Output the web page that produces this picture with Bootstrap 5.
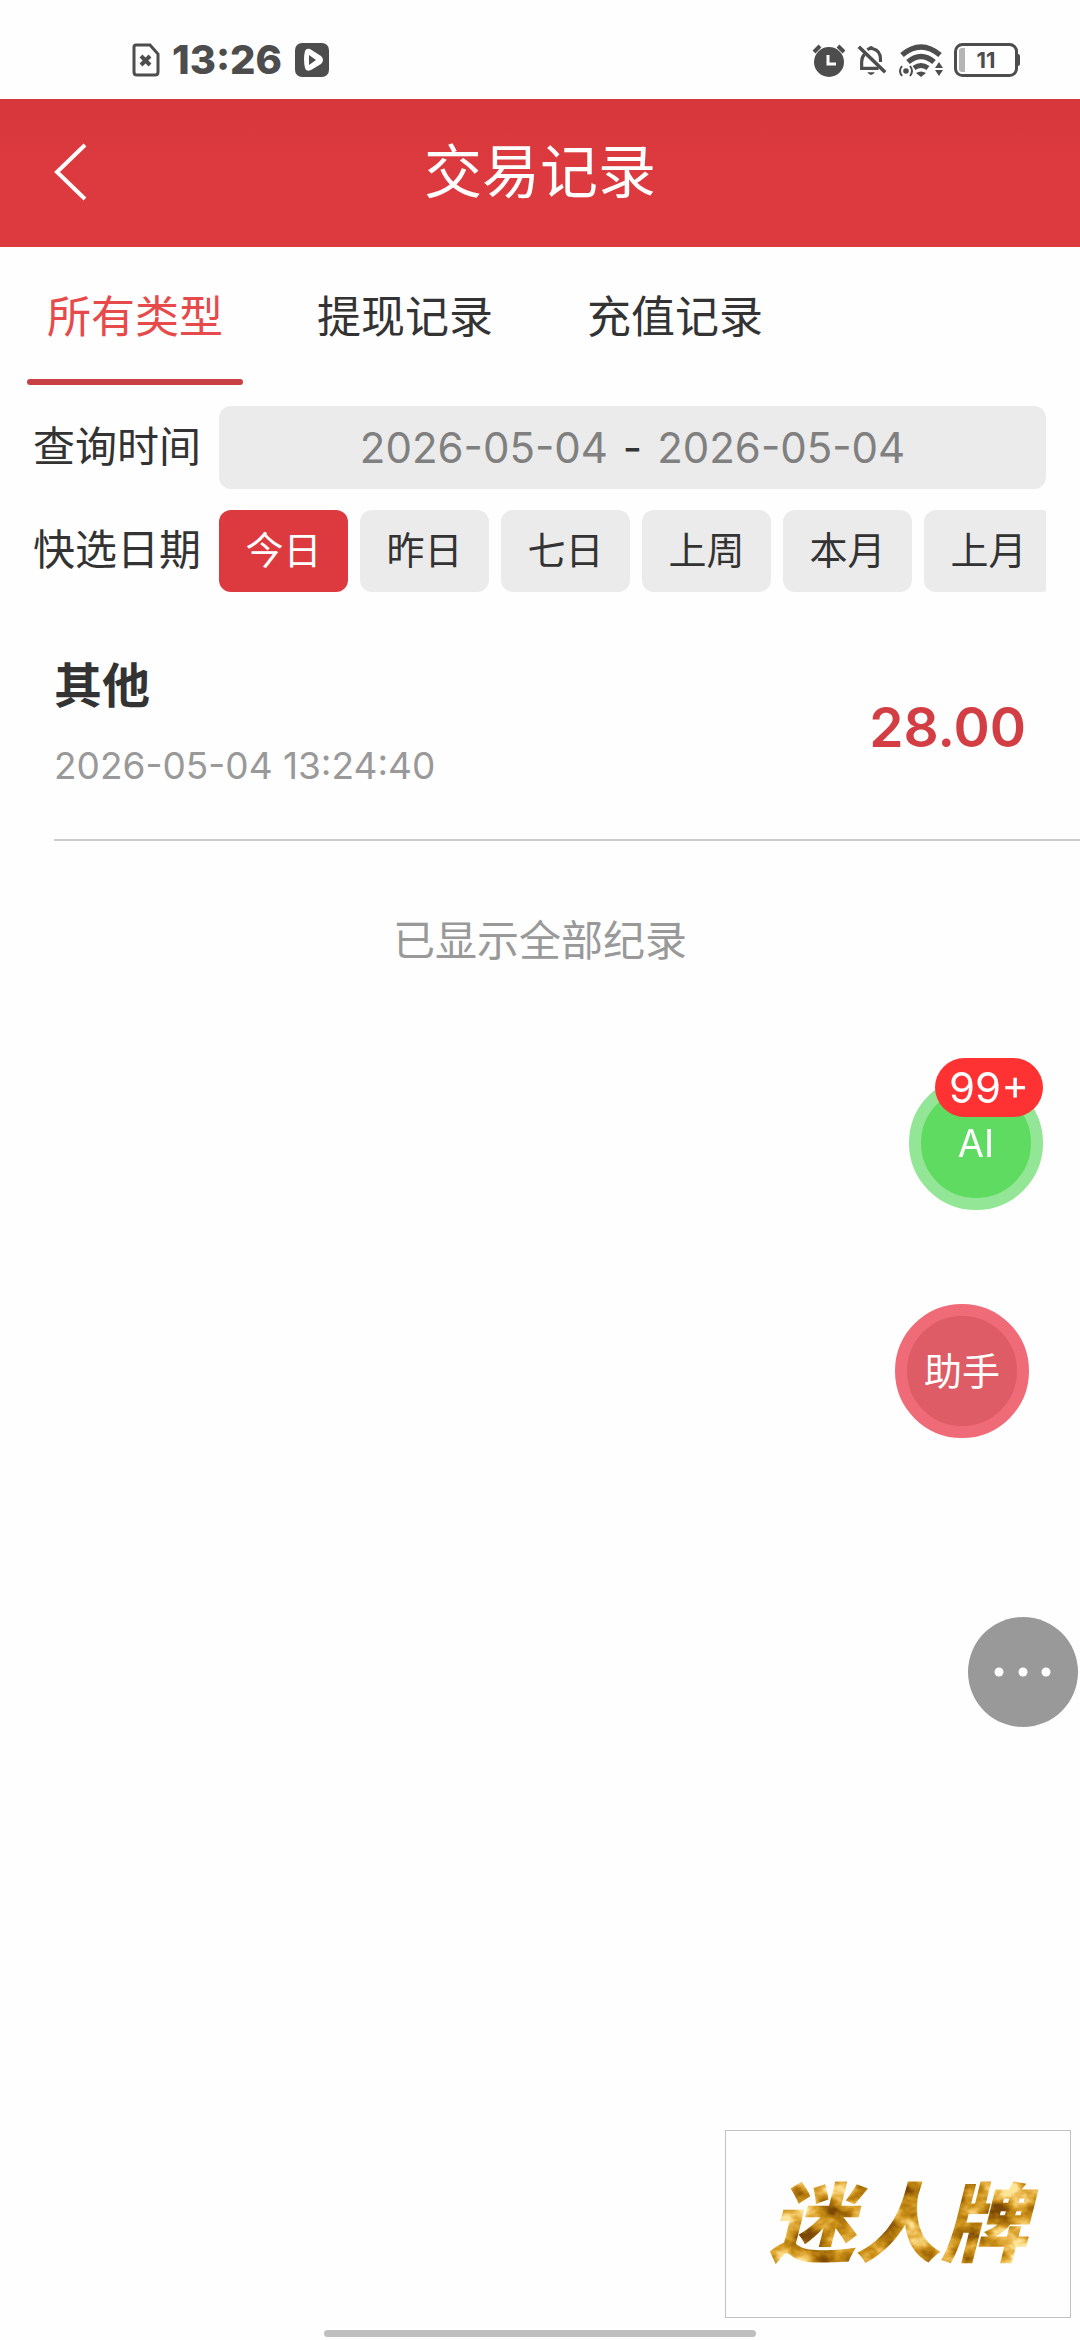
<!DOCTYPE html>
<html lang="zh-CN">
<head>
<meta charset="utf-8">
<meta name="viewport" content="width=device-width, initial-scale=1">
<title>交易记录</title>
<link href="https://cdn.jsdelivr.net/npm/bootstrap@5.3.0/dist/css/bootstrap.min.css" rel="stylesheet">
<style>
:root{--brand:#dc3a3f;--ink:#333;--chip:#ebebeb}
body{font-family:Inter,"Noto Sans CJK SC",sans-serif;color:var(--ink);background:#fefefe;min-height:100vh}
svg{display:block;flex:none}
.status-bar{height:99px;padding:20px 58px 0 132px;color:#4d4d4d}
.clock{font-size:40px;font-weight:800;line-height:40px;margin:0 13px 0 12px}
.signals{gap:10px}
.battery{width:68px;height:34px}
.battery-level{font-size:22px;line-height:34px;font-weight:700;padding-right:4px}
.title-bar{height:148px;padding-bottom:2px;background:linear-gradient(#d7373b,#dc3a3f 50%);color:#fff}
.title-bar h1{font-size:58px;line-height:84px;font-weight:400}
.back{left:53px}
.type-tabs{gap:54px;padding:0 27px}
.type-tabs a{width:216px;height:138px;padding-top:37px;font-size:44px;line-height:66px;color:var(--ink)}
.type-tabs a.active{color:#e64a4a}
.type-tabs a.active::after{content:"";position:absolute;left:0;right:0;bottom:0;height:6px;border-radius:3px;background:#c94044}
.filters{padding:21px 34px 0 33px;gap:21px}
.filter-label{width:186px;font-size:42px;line-height:60px;padding-bottom:2px}
.date-range{height:83px;border-radius:12px;background:var(--chip);gap:12px;font-size:42px}
.date-range input{width:254px;border:0;padding:0;background:none;color:#808080;text-align:center;font-size:42px;line-height:60px}
.quick{gap:12px}
.quick .btn{width:129px;height:82px;padding:0 0 2px;border:0;border-radius:12px;background:var(--chip);color:var(--ink);font-size:38px;line-height:80px}
.quick .btn.active{background:var(--brand);color:#fff}
.record{margin-left:54px;padding:58px 54px 49px 0;border-bottom:2px solid #ccc}
.record h2{font-size:48px;line-height:72px;font-weight:700}
.record time{font-size:37px;line-height:48px;color:#999;margin-top:20px}
.amount{font-size:55px;line-height:72px;font-weight:600;color:#d23e43;padding-top:14px}
.end-note{margin-top:70px;font-size:42px;line-height:60px;color:#999}
.bubble{width:134px;height:134px;border-radius:50%;color:#fff;font-size:38px;line-height:40px;padding:0}
.bubble-ai{right:37px;top:1076px;background:#60db61;border:12px solid #93e695}
.bubble-help{right:51px;top:1304px;background:#de5c66;border:12px solid #ef6b77}
.unread{right:-12px;top:-30px;height:59px;width:108px;border-radius:30px;background:#ff3233;font-size:42px;line-height:59px}
.bubble-more{right:2px;top:1617px;width:110px;height:110px;border:0;background:#999}
.promo{right:9px;bottom:22px;width:346px;height:188px;background:#fefefe;border:1px solid #bfc3c3}
.promo-name{font-size:86px;line-height:96px;font-weight:900;font-style:italic;color:#c98a1c;filter:url(#goldLeaf)}
.home-bar{left:30%;right:30%;bottom:3px;height:7px;border-radius:4px;background:#bfbfbf}
</style>
<script src="https://cdn.jsdelivr.net/npm/bootstrap@5.3.0/dist/js/bootstrap.bundle.min.js"></script>
</head>
<body>
<header>
<div class="status-bar d-flex align-items-center justify-content-between">
  <div class="d-flex align-items-center">
    <svg width="28" height="34" viewBox="0 0 28 34" fill="none" stroke="currentColor"><path d="M4 2h14l8 9v18q0 3-3 3H5q-3 0-3-3V4q0-2 2-2z" stroke-width="3"/><path d="M9 13l9 9M18 13l-9 9" stroke-width="4"/></svg>
    <span class="clock">13:26</span>
    <svg width="34" height="34" viewBox="0 0 34 34"><rect width="34" height="34" rx="7" fill="currentColor"/><path d="M10 8q1-3 5-2l11 7q4 4 0 8l-10 6q-5 2-6-2-2-9 0-17z" fill="#fff"/><path d="M14 12l7 5-7 5z" fill="currentColor"/></svg>
  </div>
  <div class="signals d-flex align-items-center">
    <svg width="34" height="34" viewBox="0 0 34 34" fill="none" stroke="currentColor"><circle cx="17" cy="19" r="15" fill="currentColor" stroke="none"/><path d="M2 9l6-6M32 9l-6-6" stroke-width="4"/><path d="M16 12v9h8" stroke="#fff" stroke-width="3"/></svg>
    <svg width="32" height="34" viewBox="0 0 34 34" fill="none" stroke="currentColor" stroke-width="3.400"><path d="M9 11q-3 3-3 8v7h18M12 6q3-2 6-1 8 2 8 11v3"/><path d="M3 3l28 27" stroke-width="3.800"/><path d="M12 30h8q-4 6-8 0z" fill="currentColor" stroke="none"/><path d="M13 4q3-4 6 0z" fill="currentColor" stroke="none"/></svg>
    <svg width="46" height="34" viewBox="0 0 46 34" fill="none" stroke="currentColor"><path d="M4 12Q23-4 42 12M10 19q13-11 26 0" stroke-width="5.500"/><path d="M16 25q7-5 14 0" stroke-width="5"/><path d="M18 30q5-3 10 0l-5 4z" fill="currentColor" stroke="none"/><circle cx="8" cy="28" r="2.800" fill="currentColor" stroke="none"/><path d="M4 23q-4 5 0 10M12 23q4 5 0 10" stroke-width="2"/><path d="M37 25l4-6 4 6zM37 27h8l-4 6z" fill="currentColor" stroke="none"/></svg>
    <div class="battery position-relative text-center">
      <svg class="position-absolute top-0 start-0" width="68" height="34" viewBox="0 0 68 34"><rect x="1.500" y="1.500" width="61" height="31" rx="7" fill="none" stroke="currentColor" stroke-width="3"/><path d="M5 8q0-3 3-3h3v24H8q-3 0-3-3z" fill="#b5b5b5"/><path d="M64 11q2 0 2 2v8q0 2-2 2z" fill="currentColor"/></svg>
      <span class="battery-level position-relative d-block">11</span>
    </div>
  </div>
</div>
<div class="title-bar d-flex align-items-center justify-content-center position-relative">
  <a class="back position-absolute text-white" href="#" aria-label="返回"><svg width="36" height="60" viewBox="0 0 36 60" fill="none" stroke="currentColor" stroke-width="4"><path d="M32 3L4 30l28 27"/></svg></a>
  <h1 class="m-0">交易记录</h1>
</div>
</header>
<main>
<nav class="type-tabs d-flex text-center">
  <a class="active position-relative text-decoration-none" href="#" aria-current="page">所有类型</a>
  <a class="text-decoration-none" href="#">提现记录</a>
  <a class="text-decoration-none" href="#">充值记录</a>
</nav>
<form class="filters d-flex flex-column">
  <div class="d-flex align-items-center">
    <label class="filter-label flex-shrink-0" for="from">查询时间</label>
    <div class="date-range d-flex flex-grow-1 align-items-center justify-content-center">
      <input id="from" type="text" value="2026-05-04" readonly><span>-</span><input type="text" value="2026-05-04" aria-label="结束日期" readonly>
    </div>
  </div>
  <div class="d-flex align-items-center">
    <span class="filter-label flex-shrink-0" id="quickLabel">快选日期</span>
    <div class="quick d-flex flex-grow-1 overflow-hidden" role="group" aria-labelledby="quickLabel">
      <button type="button" class="btn active flex-shrink-0">今日</button>
      <button type="button" class="btn flex-shrink-0">昨日</button>
      <button type="button" class="btn flex-shrink-0">七日</button>
      <button type="button" class="btn flex-shrink-0">上周</button>
      <button type="button" class="btn flex-shrink-0">本月</button>
      <button type="button" class="btn flex-shrink-0">上月</button>
    </div>
  </div>
</form>
<article class="record d-flex align-items-center justify-content-between">
  <div><h2 class="m-0">其他</h2><time class="d-block" datetime="2026-05-04T13:24:40">2026-05-04 13:24:40</time></div>
  <span class="amount">28.00</span>
</article>
<p class="end-note text-center mb-0">已显示全部纪录</p>
</main>
<button type="button" class="bubble bubble-ai position-fixed">AI<span class="unread position-absolute">99+</span></button>
<button type="button" class="bubble bubble-help position-fixed">助手</button>
<button type="button" class="bubble bubble-more position-fixed" aria-label="更多"><svg width="110" height="110" viewBox="0 0 110 110" fill="#fff"><circle cx="31" cy="55" r="4.500"/><circle cx="55" cy="55" r="4.500"/><circle cx="78" cy="55" r="4.500"/></svg></button>
<a class="promo position-fixed d-flex align-items-center justify-content-center text-decoration-none" href="#"><span class="promo-name">迷人牌</span></a>
<div class="home-bar position-fixed"></div>
<svg class="position-absolute top-0 start-0" width="0" height="0" aria-hidden="true">
  <filter id="goldLeaf" color-interpolation-filters="sRGB">
    <feTurbulence type="fractalNoise" baseFrequency="0.03 0.04" numOctaves="4" seed="7"/>
    <feColorMatrix values="2.2 0 0 0 -0.6  2.2 0 0 0 -0.6  2.2 0 0 0 -0.6  0 0 0 0 1"/>
    <feComponentTransfer result="leaf"><feFuncR type="table" tableValues="0.48 0.65 0.8 0.92 1"/><feFuncG type="table" tableValues="0.28 0.43 0.57 0.72 0.9"/><feFuncB type="table" tableValues="0.02 0.04 0.1 0.3 0.6"/></feComponentTransfer>
    <feComposite in="leaf" in2="SourceAlpha" operator="in"/>
  </filter>
</svg>
</body>
</html>
